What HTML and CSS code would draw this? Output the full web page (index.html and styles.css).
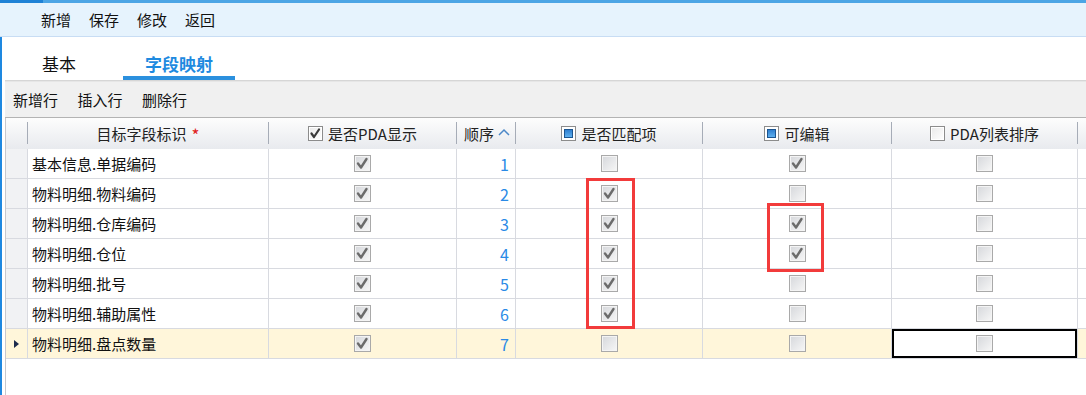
FILE: index.html
```html
<!DOCTYPE html>
<html lang="zh-CN">
<head>
<meta charset="utf-8">
<title>字段映射</title>
<link rel="stylesheet" href="styles.css">
</head>
<body>
<div class="topstrip"><span class="active"></span></div>
<div class="menu"><span>新增</span><span>保存</span><span>修改</span><span>返回</span></div>
<div class="main">
  <div class="tabs">
    <div class="tab">基本</div>
    <div class="tab on">字段映射</div>
  </div>
  <div class="toolbar"><span>新增行</span><span>插入行</span><span>删除行</span></div>
  <div class="grid">
    <div class="row head">
      <div class="c"></div>
      <div class="c"><span>目标字段标识</span><span class="req">*</span></div>
      <div class="c"><span class="hcb"><svg viewBox="0 0 13 13"><path d="M2.5 6.5 L5 10 L10 2.5"/></svg></span><span>是否PDA显示</span></div>
      <div class="c sort"><span>顺序</span><svg class="arrow" viewBox="0 0 12 8"><path d="M1 7 L6 2 L11 7"/></svg></div>
      <div class="c"><span class="hcb ind"><i></i></span><span>是否匹配项</span></div>
      <div class="c"><span class="hcb ind"><i></i></span><span>可编辑</span></div>
      <div class="c"><span class="hcb"></span><span>PDA列表排序</span></div>
      <div class="c"></div>
    </div>

    <div class="row">
      <div class="c ind-cell"></div>
      <div class="c txt">基本信息.单据编码</div>
      <div class="c"><span class="cb on"><svg viewBox="0 0 15 15"><path d="M3 7.5 L6 11.5 L11.5 3"/></svg></span></div>
      <div class="c num">1</div>
      <div class="c"><span class="cb"></span></div>
      <div class="c"><span class="cb on"><svg viewBox="0 0 15 15"><path d="M3 7.5 L6 11.5 L11.5 3"/></svg></span></div>
      <div class="c"><span class="cb"></span></div>
      <div class="c"></div>
    </div>

    <div class="row">
      <div class="c ind-cell"></div>
      <div class="c txt">物料明细.物料编码</div>
      <div class="c"><span class="cb on"><svg viewBox="0 0 15 15"><path d="M3 7.5 L6 11.5 L11.5 3"/></svg></span></div>
      <div class="c num">2</div>
      <div class="c"><span class="cb on"><svg viewBox="0 0 15 15"><path d="M3 7.5 L6 11.5 L11.5 3"/></svg></span></div>
      <div class="c"><span class="cb"></span></div>
      <div class="c"><span class="cb"></span></div>
      <div class="c"></div>
    </div>

    <div class="row">
      <div class="c ind-cell"></div>
      <div class="c txt">物料明细.仓库编码</div>
      <div class="c"><span class="cb on"><svg viewBox="0 0 15 15"><path d="M3 7.5 L6 11.5 L11.5 3"/></svg></span></div>
      <div class="c num">3</div>
      <div class="c"><span class="cb on"><svg viewBox="0 0 15 15"><path d="M3 7.5 L6 11.5 L11.5 3"/></svg></span></div>
      <div class="c"><span class="cb on"><svg viewBox="0 0 15 15"><path d="M3 7.5 L6 11.5 L11.5 3"/></svg></span></div>
      <div class="c"><span class="cb"></span></div>
      <div class="c"></div>
    </div>

    <div class="row">
      <div class="c ind-cell"></div>
      <div class="c txt">物料明细.仓位</div>
      <div class="c"><span class="cb on"><svg viewBox="0 0 15 15"><path d="M3 7.5 L6 11.5 L11.5 3"/></svg></span></div>
      <div class="c num">4</div>
      <div class="c"><span class="cb on"><svg viewBox="0 0 15 15"><path d="M3 7.5 L6 11.5 L11.5 3"/></svg></span></div>
      <div class="c"><span class="cb on"><svg viewBox="0 0 15 15"><path d="M3 7.5 L6 11.5 L11.5 3"/></svg></span></div>
      <div class="c"><span class="cb"></span></div>
      <div class="c"></div>
    </div>

    <div class="row">
      <div class="c ind-cell"></div>
      <div class="c txt">物料明细.批号</div>
      <div class="c"><span class="cb on"><svg viewBox="0 0 15 15"><path d="M3 7.5 L6 11.5 L11.5 3"/></svg></span></div>
      <div class="c num">5</div>
      <div class="c"><span class="cb on"><svg viewBox="0 0 15 15"><path d="M3 7.5 L6 11.5 L11.5 3"/></svg></span></div>
      <div class="c"><span class="cb"></span></div>
      <div class="c"><span class="cb"></span></div>
      <div class="c"></div>
    </div>

    <div class="row">
      <div class="c ind-cell"></div>
      <div class="c txt">物料明细.辅助属性</div>
      <div class="c"><span class="cb on"><svg viewBox="0 0 15 15"><path d="M3 7.5 L6 11.5 L11.5 3"/></svg></span></div>
      <div class="c num">6</div>
      <div class="c"><span class="cb on"><svg viewBox="0 0 15 15"><path d="M3 7.5 L6 11.5 L11.5 3"/></svg></span></div>
      <div class="c"><span class="cb"></span></div>
      <div class="c"><span class="cb"></span></div>
      <div class="c"></div>
    </div>

    <div class="row current">
      <div class="c ind-cell"><span class="tri"></span></div>
      <div class="c txt">物料明细.盘点数量</div>
      <div class="c"><span class="cb on"><svg viewBox="0 0 15 15"><path d="M3 7.5 L6 11.5 L11.5 3"/></svg></span></div>
      <div class="c num">7</div>
      <div class="c"><span class="cb"></span></div>
      <div class="c"><span class="cb"></span></div>
      <div class="c focus"><span class="cb"></span></div>
      <div class="c"></div>
    </div>
  </div>
</div>
<div class="mark m1"></div>
<div class="mark m2"></div>
</body>
</html>
```

FILE: styles.css
```css
* { box-sizing: border-box; }
html, body { margin: 0; }
body {
  width: 1086px;
  height: 395px;
  overflow: hidden;
  position: relative;
  display: flex;
  flex-direction: column;
  background: #fff;
  color: #111;
  font-family: "Noto Sans CJK SC", "Microsoft YaHei", sans-serif;
  font-size: 15px;
}

.topstrip { height: 3px; background: #4ca5e5; display: flex; flex: none; }
.topstrip .active { width: 43px; background: #1f82d6; }

.menu {
  flex: none;
  height: 34px;
  background: #e6f3fd;
  border-bottom: 1px solid #c8ddf4;
  display: flex;
  align-items: center;
  gap: 18px;
  padding-left: 41px;
}
.menu span { line-height: 20px; }

.main {
  flex: 1;
  min-height: 0;
  border-left: 2px solid #1e88e0;
  padding-left: 3px;
  display: flex;
  flex-direction: column;
}

.tabs {
  flex: none;
  height: 43px;
  display: flex;
  align-items: flex-end;
  gap: 27px;
  padding-left: 17px;
}
.tab {
  font-size: 17px;
  line-height: 24px;
  padding: 0 20px;
  border-bottom: 4px solid transparent;
  color: #111;
}
.tab.on {
  padding: 0 22px;
  color: #1e8ae0;
  font-weight: bold;
  border-bottom-color: #2b90de;
}

.toolbar {
  flex: none;
  height: 38px;
  background: #f0f0f0;
  border-top: 1px solid #d6d6d6;
  box-shadow: inset 0 1px 0 #e6e6e6;
  border-bottom: 1px solid #b3b3b3;
  padding-top: 1px;
  padding-left: 8px;
  display: flex;
  align-items: center;
  gap: 19.5px;
}

.grid {
  flex: 1;
  min-height: 0;
  overflow: hidden;
  border-left: 1px solid #c6c7cc;
}
.row {
  display: grid;
  grid-template-columns: 22px 241px 188px 59px 187px 189px 186px 200px;
  height: 30px;
}
.row .c {
  border-right: 1px solid #d8dae0;
  border-bottom: 1px solid #d8dae0;
  display: flex;
  align-items: center;
  justify-content: center;
}
.row .txt { justify-content: flex-start; padding-left: 4px; color: #111; }
.row .num { justify-content: flex-end; padding-right: 6px; color: #2a8ae6; font-size: 16px; }
.ind-cell { background: #f1f2f4; }
.row.current .c { background: #fff6da; }
.row.current .c.focus { background: #fff; box-shadow: inset 0 0 0 2px #000; }

.tri {
  width: 0; height: 0;
  border-left: 5px solid #1c2b4d;
  border-top: 4px solid transparent;
  border-bottom: 4px solid transparent;
}

.row.head {
  height: 31px;
  background: linear-gradient(#fdfdfd, #e8eaee);
}
.row.head .c {
  border-bottom: 1px solid #b9bcc4;
  border-right: 1px solid #a6acb7;
  border-image: linear-gradient(to bottom, transparent 5px, #a6acb7 5px, #a6acb7 26px, transparent 26px) 1;
  color: #222;
  gap: 5px;
}
.req { color: #e02020; font-size: 17px; line-height: 1; margin-left: 0; margin-top: 2px; }
.sort { gap: 4px !important; padding-left: 2px; }
.arrow { width: 12px; height: 8px; margin-top: -2px; }
.arrow path { fill: none; stroke: #4c88c8; stroke-width: 1.5; }

.hcb {
  width: 15px; height: 15px;
  border: 1px solid #8c8c8c;
  background: linear-gradient(135deg, #e9e9e9, #ffffff);
  box-shadow: inset 0 0 0 1px #fff;
  display: flex;
  align-items: center;
  justify-content: center;
  flex: none;
}
.hcb svg { width: 13px; height: 13px; }
.hcb svg path { fill: none; stroke: #3a3a3a; stroke-width: 2.2; stroke-linecap: round; stroke-linejoin: round; }
.hcb.ind { background: #fff; }
.hcb.ind i {
  width: 9px; height: 9px;
  border: 1px solid #1c5590;
  background: linear-gradient(#2f7fd0, #5fb0ee);
}

.cb {
  width: 17px; height: 17px;
  border: 1px solid #a9a9a9;
  background: linear-gradient(135deg, #d5d7db, #f7f7f7);
  box-shadow: inset 0 0 0 1px #f4f4f4;
  display: flex;
  align-items: center;
  justify-content: center;
}
.cb svg { width: 15px; height: 15px; }
.cb svg path { fill: none; stroke: #6b6b6b; stroke-width: 2.4; stroke-linecap: round; stroke-linejoin: round; }

.mark {
  position: absolute;
  border: 3px solid #f23b3b;
}
.m1 { left: 586px; top: 178px; width: 49px; height: 151px; }
.m2 { left: 767px; top: 203px; width: 57px; height: 69px; }
```
